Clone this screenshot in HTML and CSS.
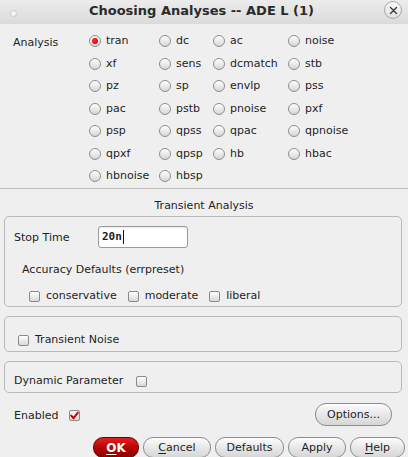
FILE: index.html
```html
<!DOCTYPE html>
<html>
<head>
<meta charset="utf-8">
<link rel="stylesheet" href="styles.css">
</head>
<body>
<div class="window">
  <div class="titlebar">
    <span class="tb-dot"></span>
    <span class="tb-title">Choosing Analyses -- ADE L (1)</span>
    <span class="tb-close">
      <svg width="9" height="9" viewBox="0 0 9 9"><path d="M1.5 1.5 L7.5 7.5 M7.5 1.5 L1.5 7.5" stroke="#3a3a3a" stroke-width="1.4" stroke-linecap="round"/></svg>
    </span>
  </div>

  <div class="analysis">
    <div class="analysis-label">Analysis</div>
    <div class="radio-grid">
      <label class="opt"><span class="radio on"></span>tran</label>
      <label class="opt"><span class="radio"></span>dc</label>
      <label class="opt"><span class="radio"></span>ac</label>
      <label class="opt"><span class="radio"></span>noise</label>
      <label class="opt"><span class="radio"></span>xf</label>
      <label class="opt"><span class="radio"></span>sens</label>
      <label class="opt"><span class="radio"></span>dcmatch</label>
      <label class="opt"><span class="radio"></span>stb</label>
      <label class="opt"><span class="radio"></span>pz</label>
      <label class="opt"><span class="radio"></span>sp</label>
      <label class="opt"><span class="radio"></span>envlp</label>
      <label class="opt"><span class="radio"></span>pss</label>
      <label class="opt"><span class="radio"></span>pac</label>
      <label class="opt"><span class="radio"></span>pstb</label>
      <label class="opt"><span class="radio"></span>pnoise</label>
      <label class="opt"><span class="radio"></span>pxf</label>
      <label class="opt"><span class="radio"></span>psp</label>
      <label class="opt"><span class="radio"></span>qpss</label>
      <label class="opt"><span class="radio"></span>qpac</label>
      <label class="opt"><span class="radio"></span>qpnoise</label>
      <label class="opt"><span class="radio"></span>qpxf</label>
      <label class="opt"><span class="radio"></span>qpsp</label>
      <label class="opt"><span class="radio"></span>hb</label>
      <label class="opt"><span class="radio"></span>hbac</label>
      <label class="opt"><span class="radio"></span>hbnoise</label>
      <label class="opt"><span class="radio"></span>hbsp</label>
    </div>
  </div>

  <div class="sep"></div>

  <div class="section-title">Transient Analysis</div>

  <div class="group g1">
    <div class="stop-row">
      <span class="stop-label">Stop Time</span>
      <span class="input">20n<span class="caret"></span></span>
    </div>
    <div class="acc-label">Accuracy Defaults (errpreset)</div>
    <div class="check-row">
      <label class="chk-item"><span class="check"></span>conservative</label>
      <label class="chk-item"><span class="check"></span>moderate</label>
      <label class="chk-item"><span class="check"></span>liberal</label>
    </div>
  </div>

  <div class="group g2">
    <label class="chk-item"><span class="check"></span>Transient Noise</label>
  </div>

  <div class="group g3">
    <label class="chk-item dyn">Dynamic Parameter<span class="check"></span></label>
  </div>

  <div class="enabled-row">
    <label class="chk-item en">Enabled<span class="check checked">
      <svg width="11" height="11" viewBox="0 0 11 11"><path d="M2.2 5.6 L4.6 8.2 L8.8 2.6" fill="none" stroke="#d40000" stroke-width="2" stroke-linecap="round" stroke-linejoin="round"/></svg>
    </span></label>
    <button class="btn options">Options...</button>
  </div>

  <div class="button-row">
    <button class="btn ok"><u>O</u>K</button>
    <button class="btn cancel"><u>C</u>ancel</button>
    <button class="btn defaults">Defaults</button>
    <button class="btn apply">Apply</button>
    <button class="btn help"><u>H</u>elp</button>
  </div>
</div>
</body>
</html>
```

FILE: styles.css
```css
* { box-sizing: border-box; }
html, body {
  margin: 0;
  padding: 0;
  background: #efefef;
}
body {
  font-family: "DejaVu Sans", sans-serif;
  font-size: 11px;
  color: #1e1e1e;
  width: 408px;
  height: 457px;
  overflow: hidden;
}
.window {
  width: 408px;
  height: 457px;
  background: #efefef;
}

/* Title bar */
.titlebar {
  height: 24px;
  background: linear-gradient(#ececec, #dadada);
  display: flex;
  align-items: flex-start;
}
.tb-dot {
  width: 7px;
  height: 7px;
  border-radius: 50%;
  background: #f6f6f6;
  border: 1px solid #c8c8c8;
  margin: 10px 0 0 10px;
}
.tb-title {
  flex: 1;
  text-align: center;
  font-weight: bold;
  font-size: 13px;
  line-height: 21px;
  color: #2a2a2a;
  padding-left: 2px;
}
.tb-close {
  width: 18px;
  height: 18px;
  border-radius: 50%;
  border: 1px solid #a8a8a8;
  background: linear-gradient(#fbfbfb, #dedede);
  display: flex;
  align-items: center;
  justify-content: center;
  margin: 1px 6px 0 0;
}

/* Analysis radios */
.analysis {
  display: flex;
  padding: 6px 0 0 13px;
  height: 164px;
}
.analysis-label {
  width: 76px;
  padding-top: 6px;
  line-height: 14px;
}
.radio-grid {
  display: grid;
  grid-template-columns: 70px 54px 75px 1fr;
  grid-auto-rows: 22.5px;
  align-items: center;
}
.opt {
  display: flex;
  align-items: center;
  line-height: 14px;
  white-space: nowrap;
}
.radio {
  width: 12px;
  height: 12px;
  border-radius: 50%;
  border: 1px solid #8e8e8e;
  background: linear-gradient(#ffffff, #d6d6d6);
  margin-right: 5px;
  flex: none;
  display: flex;
  align-items: center;
  justify-content: center;
}
.radio.on::after {
  content: "";
  width: 6px;
  height: 6px;
  border-radius: 50%;
  background: radial-gradient(circle at 40% 35%, #ff2a2a, #c80000);
}

.sep {
  border-top: 1px solid #bdbdbd;
}
.section-title {
  text-align: center;
  line-height: 16px;
  padding-top: 9px;
  height: 27px;
}

/* Group boxes */
.group {
  margin: 0 6px 0 4px;
  border: 1px solid #b9b9b9;
  border-radius: 5px;
}
.g1 {
  height: 91px;
  padding: 9px 0 0 9px;
}
.stop-row {
  display: flex;
  align-items: center;
  height: 22px;
}
.stop-label {
  width: 84px;
}
.input {
  width: 90px;
  height: 22px;
  background: #fff;
  border: 1px solid #9a9a9a;
  border-radius: 3px;
  font-family: "DejaVu Sans Mono", monospace;
  font-weight: bold;
  font-size: 11px;
  line-height: 20px;
  padding-left: 3px;
  display: flex;
  align-items: center;
  box-shadow: inset 0 1px 1px rgba(0,0,0,0.08);
}
.caret {
  width: 1px;
  height: 14px;
  background: #111;
  margin-left: 1px;
}
.acc-label {
  margin: 14px 0 0 8px;
  line-height: 16px;
}
.check-row {
  display: flex;
  gap: 11px;
  margin: 10px 0 0 15px;
  line-height: 16px;
}
.chk-item {
  display: flex;
  align-items: center;
  line-height: 16px;
  white-space: nowrap;
}
.check {
  width: 11px;
  height: 11px;
  border: 1px solid #8a8a8a;
  border-radius: 2px;
  background: linear-gradient(#ffffff, #d8d8d8);
  margin-right: 6px;
  flex: none;
  display: flex;
  align-items: center;
  justify-content: center;
}
.check svg { display: block; margin: -1px; }

.g2 {
  margin-top: 9px;
  height: 36px;
  padding: 15px 0 0 13px;
}
.g3 {
  margin-top: 9px;
  height: 32px;
  padding: 11px 0 0 9px;
}
.dyn .check {
  margin: 0 0 0 13px;
}
.en .check { margin: 0 0 0 11px; }

.enabled-row {
  margin-top: 10px;
  height: 23px;
  display: flex;
  align-items: center;
  justify-content: space-between;
  padding: 0 16px 0 14px;
}
.enabled-row .en { padding-top: 2px; }

/* Buttons */
.btn {
  font-family: "DejaVu Sans", sans-serif;
  font-size: 11px;
  color: #1e1e1e;
  border: 1px solid #8c8c8c;
  border-radius: 10px;
  background: linear-gradient(#fcfcfc, #e6e6e6 55%, #d6d6d6);
  padding: 0;
  margin: 0;
  line-height: 14px;
}
.options {
  width: 77px;
  height: 23px;
  border-radius: 11px;
}
.button-row {
  margin-top: 11px;
  display: flex;
  gap: 4px;
  padding-left: 93px;
}
.button-row .btn {
  height: 21px;
}
.ok {
  width: 46px;
  background: linear-gradient(#e02020, #b00000 60%, #8c0000);
  border-color: #6e0000;
  color: #fff;
  font-weight: bold;
  font-size: 12px;
}
.cancel { width: 68px; }
.defaults { width: 69px; }
.apply { width: 58px; }
.help { width: 55px; }
u { text-decoration-thickness: 1px; text-underline-offset: 2px; }
```
